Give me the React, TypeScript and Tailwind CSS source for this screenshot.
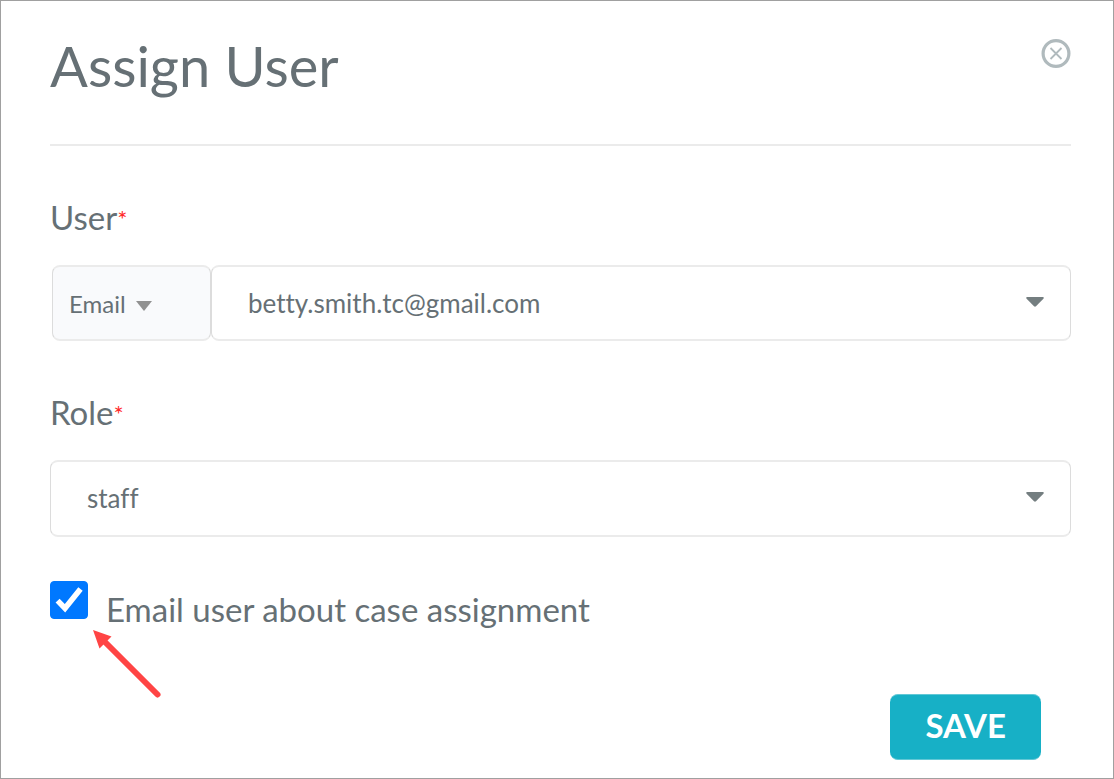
import { useState } from "react";

function Label({ htmlFor, children }: { htmlFor: string; children: string }) {
  return (
    <label htmlFor={htmlFor} className="flex pt-[51px] pb-6 text-[33px] leading-10">
      {children}
      <span aria-hidden="true" className="text-[24px] leading-[44px] text-[#ff2a2a]">*</span>
    </label>
  );
}

function Caret({ className }: { className: string }) {
  return (
    <svg aria-hidden="true" viewBox="0 0 18 10" className={className}>
      <path d="M1.2 0h15.6q1.6.4.6 1.8L10 9.2q-1 .9-2 0L.6 1.8Q-.4.4 1.2 0Z" fill="currentColor" />
    </svg>
  );
}

export default function App() {
  const [notify, setNotify] = useState(true);
  return (
    <main className="min-h-screen border border-[#a0a0a0] bg-white pr-[42px] pb-[17px] pl-[49px] font-['Lato',sans-serif] text-[#667075] [font-variant-ligatures:none]">
      <header className="flex items-start justify-between border-b-2 border-[#ebebeb] pt-[29px] pb-[42px]">
        <h1 className="text-[56px] leading-[72px]">Assign User</h1>
        <button type="button" aria-label="Close" className="mt-2 text-[#b0babd]">
          <svg aria-hidden="true" viewBox="0 0 30 30" className="size-[30px]" fill="none" stroke="currentColor">
            <circle cx="15" cy="15.5" r="12.9" strokeWidth="3.2" />
            <path d="M9.5 10l11 11M20.5 10l-11 11" strokeWidth="1.8" />
          </svg>
        </button>
      </header>
      <form onSubmit={(e) => e.preventDefault()}>
        <Label htmlFor="user">User</Label>
        <div className="flex pl-0.5">
          <div className="relative w-[159px] shrink-0">
            <select aria-label="Search by" className="h-[76px] w-full appearance-none rounded-lg border-x border-y-2 border-x-[#dcdcdc] border-y-[#ebebeb] bg-[#f9fafc] px-4 pt-0.5 text-[24px]">
              <option>Email</option>
            </select>
            <svg aria-hidden="true" viewBox="0 0 16 10" className="pointer-events-none absolute top-9 left-[84px] h-2.5 w-4">
              <path d="M0 0h16L8 10Z" fill="#919191" />
            </svg>
          </div>
          <div className="relative grow">
            <select id="user" className="h-[76px] w-full appearance-none rounded-lg border-x border-y-2 border-x-[#dcdcdc] border-y-[#ebebeb] bg-white px-9 text-[26px]">
              <option>betty.smith.tc@gmail.com</option>
            </select>
            <Caret className="pointer-events-none absolute top-8 right-[27px] h-2.5 w-[18px] text-[#747e80]" />
          </div>
        </div>
        <Label htmlFor="role">Role</Label>
        <div className="relative">
          <select id="role" className="h-[77px] w-full appearance-none rounded-lg border-x border-y-2 border-x-[#dcdcdc] border-y-[#ebebeb] bg-white px-9 text-[26px]">
            <option>staff</option>
          </select>
          <Caret className="pointer-events-none absolute top-8 right-[27px] h-2.5 w-[18px] text-[#747e80]" />
        </div>
        <div className="relative flex items-start pt-11">
          <input
            id="notify"
            type="checkbox"
            checked={notify}
            onChange={(e) => setNotify(e.target.checked)}
            className="size-[38px] appearance-none rounded border border-[#0078ff] checked:bg-[#0078ff]"
          />
          {notify && (
            <svg aria-hidden="true" viewBox="0 0 38 38" className="pointer-events-none absolute top-11 left-0 size-[38px]">
              <path d="M7.6 19.600l7.400 7.600L30.500 8" fill="none" stroke="#fff" strokeWidth="5.6" />
            </svg>
          )}
          <label htmlFor="notify" className="pt-2 pl-[18px] text-[33px] leading-10">
            Email user about case assignment
          </label>
          <svg aria-hidden="true" viewBox="0 0 72 72" className="pointer-events-none absolute top-[91px] left-[41px] size-[72px]">
            <path d="M14 14L66.500 66.500" stroke="#ff4444" strokeWidth="6" strokeLinecap="round" />
            <path d="M2 2L20.500 8.500L8.500 20.500Z" fill="#ff4444" />
          </svg>
        </div>
        <div className="flex justify-end pt-[65px] pr-[30px]">
          <button type="submit" className="h-[66px] rounded-lg border-y border-[#62c8d6] bg-[#17b0c6] px-[35px] pb-1 text-[33px] leading-10 font-bold text-white">
            SAVE
          </button>
        </div>
      </form>
    </main>
  );
}
